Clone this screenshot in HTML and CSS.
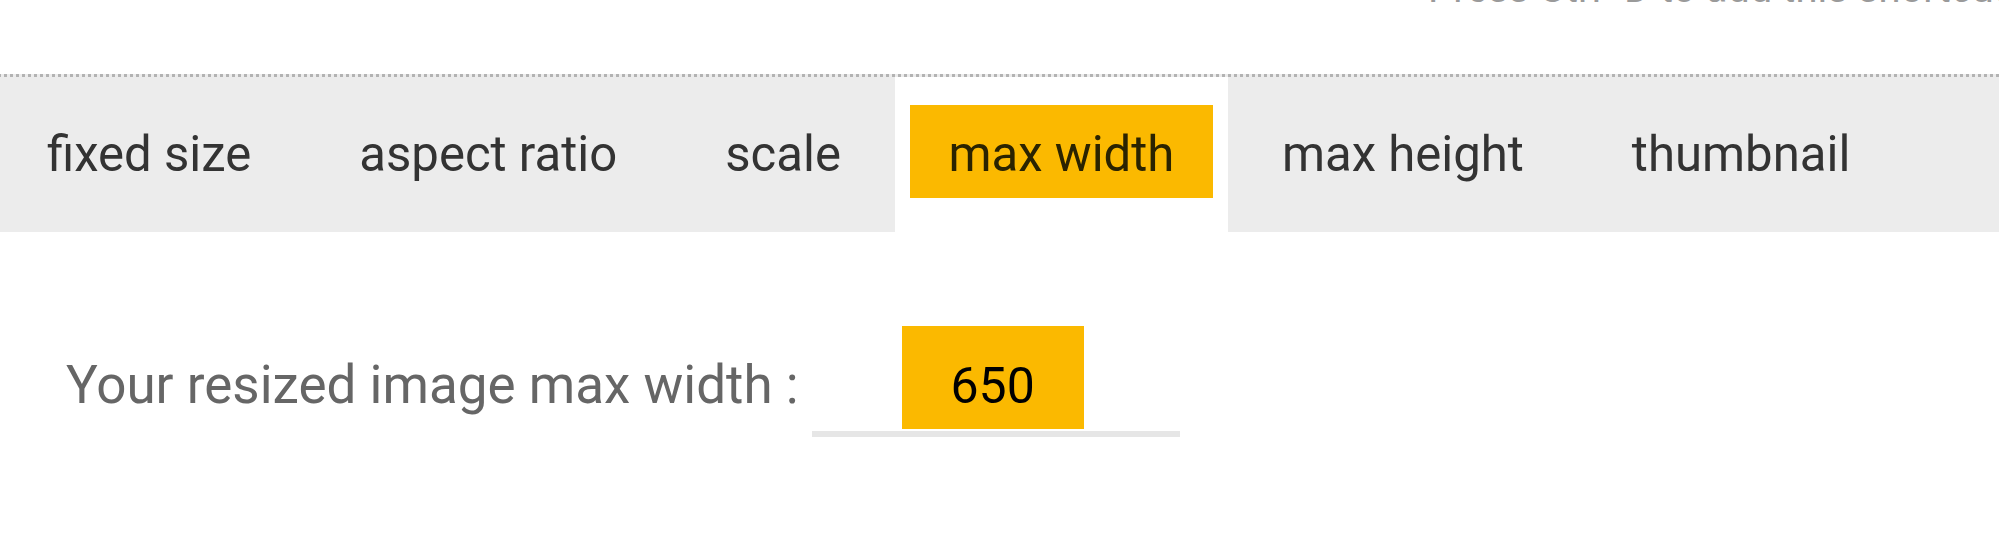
FILE: index.html
```html
<!DOCTYPE html>
<html lang="en">
<head>
<meta charset="utf-8">
<title>Resize image</title>
<link rel="stylesheet" href="styles.css">
</head>
<body>
<div class="topbar"><div class="hint">Press Ctrl+D to add this shortcut to your bookmarks</div></div>
<nav class="tabs">
  <div class="tab"><span class="tab-label">fixed size</span></div>
  <div class="tab"><span class="tab-label">aspect ratio</span></div>
  <div class="tab"><span class="tab-label">scale</span></div>
  <div class="tab active"><span class="tab-label">max width</span></div>
  <div class="tab"><span class="tab-label">max height</span></div>
  <div class="tab"><span class="tab-label">thumbnail</span></div>
</nav>
<section class="content">
  <div class="row">
    <label class="field-label">Your resized image max width :</label>
    <div class="field"><span class="value">650</span></div>
  </div>
</section>
</body>
</html>
```
FILE: styles.css
```css
html, body {
  margin: 0;
  padding: 0;
  background: #ffffff;
}
body {
  font-family: Roboto, "Liberation Sans", sans-serif;
  width: 1999px;
  height: 536px;
  overflow: hidden;
}
.topbar {
  height: 74px;
  overflow: hidden;
  padding-left: 1428px;
}
.hint {
  font-size: 40px;
  line-height: 40px;
  margin-top: -31px;
  color: #9a9a9a;
  white-space: nowrap;
}
.tabs {
  display: flex;
  border-top: 3px dotted #b3b3b3;
  background: #ececec;
  height: 155px;
  margin-left: -7px;
}
.tab {
  display: flex;
  align-items: flex-start;
  padding: 28px 54px 0;
}
.tab-label {
  display: block;
  height: 87px;
  padding-top: 6px;
  line-height: 87px;
  font-size: 49.1px;
  color: #333333;
  white-space: nowrap;
}
.tab.active {
  background: #ffffff;
  padding: 28px 15px 0;
}
.tab.active .tab-label {
  background: #fbb900;
  color: #2a2300;
  padding-left: 38.5px;
  padding-right: 38.5px;
}
.content {
  padding: 94px 0 0 66px;
}
.row {
  display: flex;
  align-items: baseline;
  gap: 13px;
}
.field-label {
  font-size: 53px;
  color: #666666;
  white-space: nowrap;
}
.field {
  width: 278px;
  padding: 0 0 2px 90px;
  border-bottom: 6px solid #e6e6e6;
}
.value {
  display: block;
  width: 182px;
  height: 85px;
  padding-top: 18px;
  line-height: 85px;
  background: #fbb900;
  color: #000000;
  font-size: 50px;
  text-align: center;
}
```
